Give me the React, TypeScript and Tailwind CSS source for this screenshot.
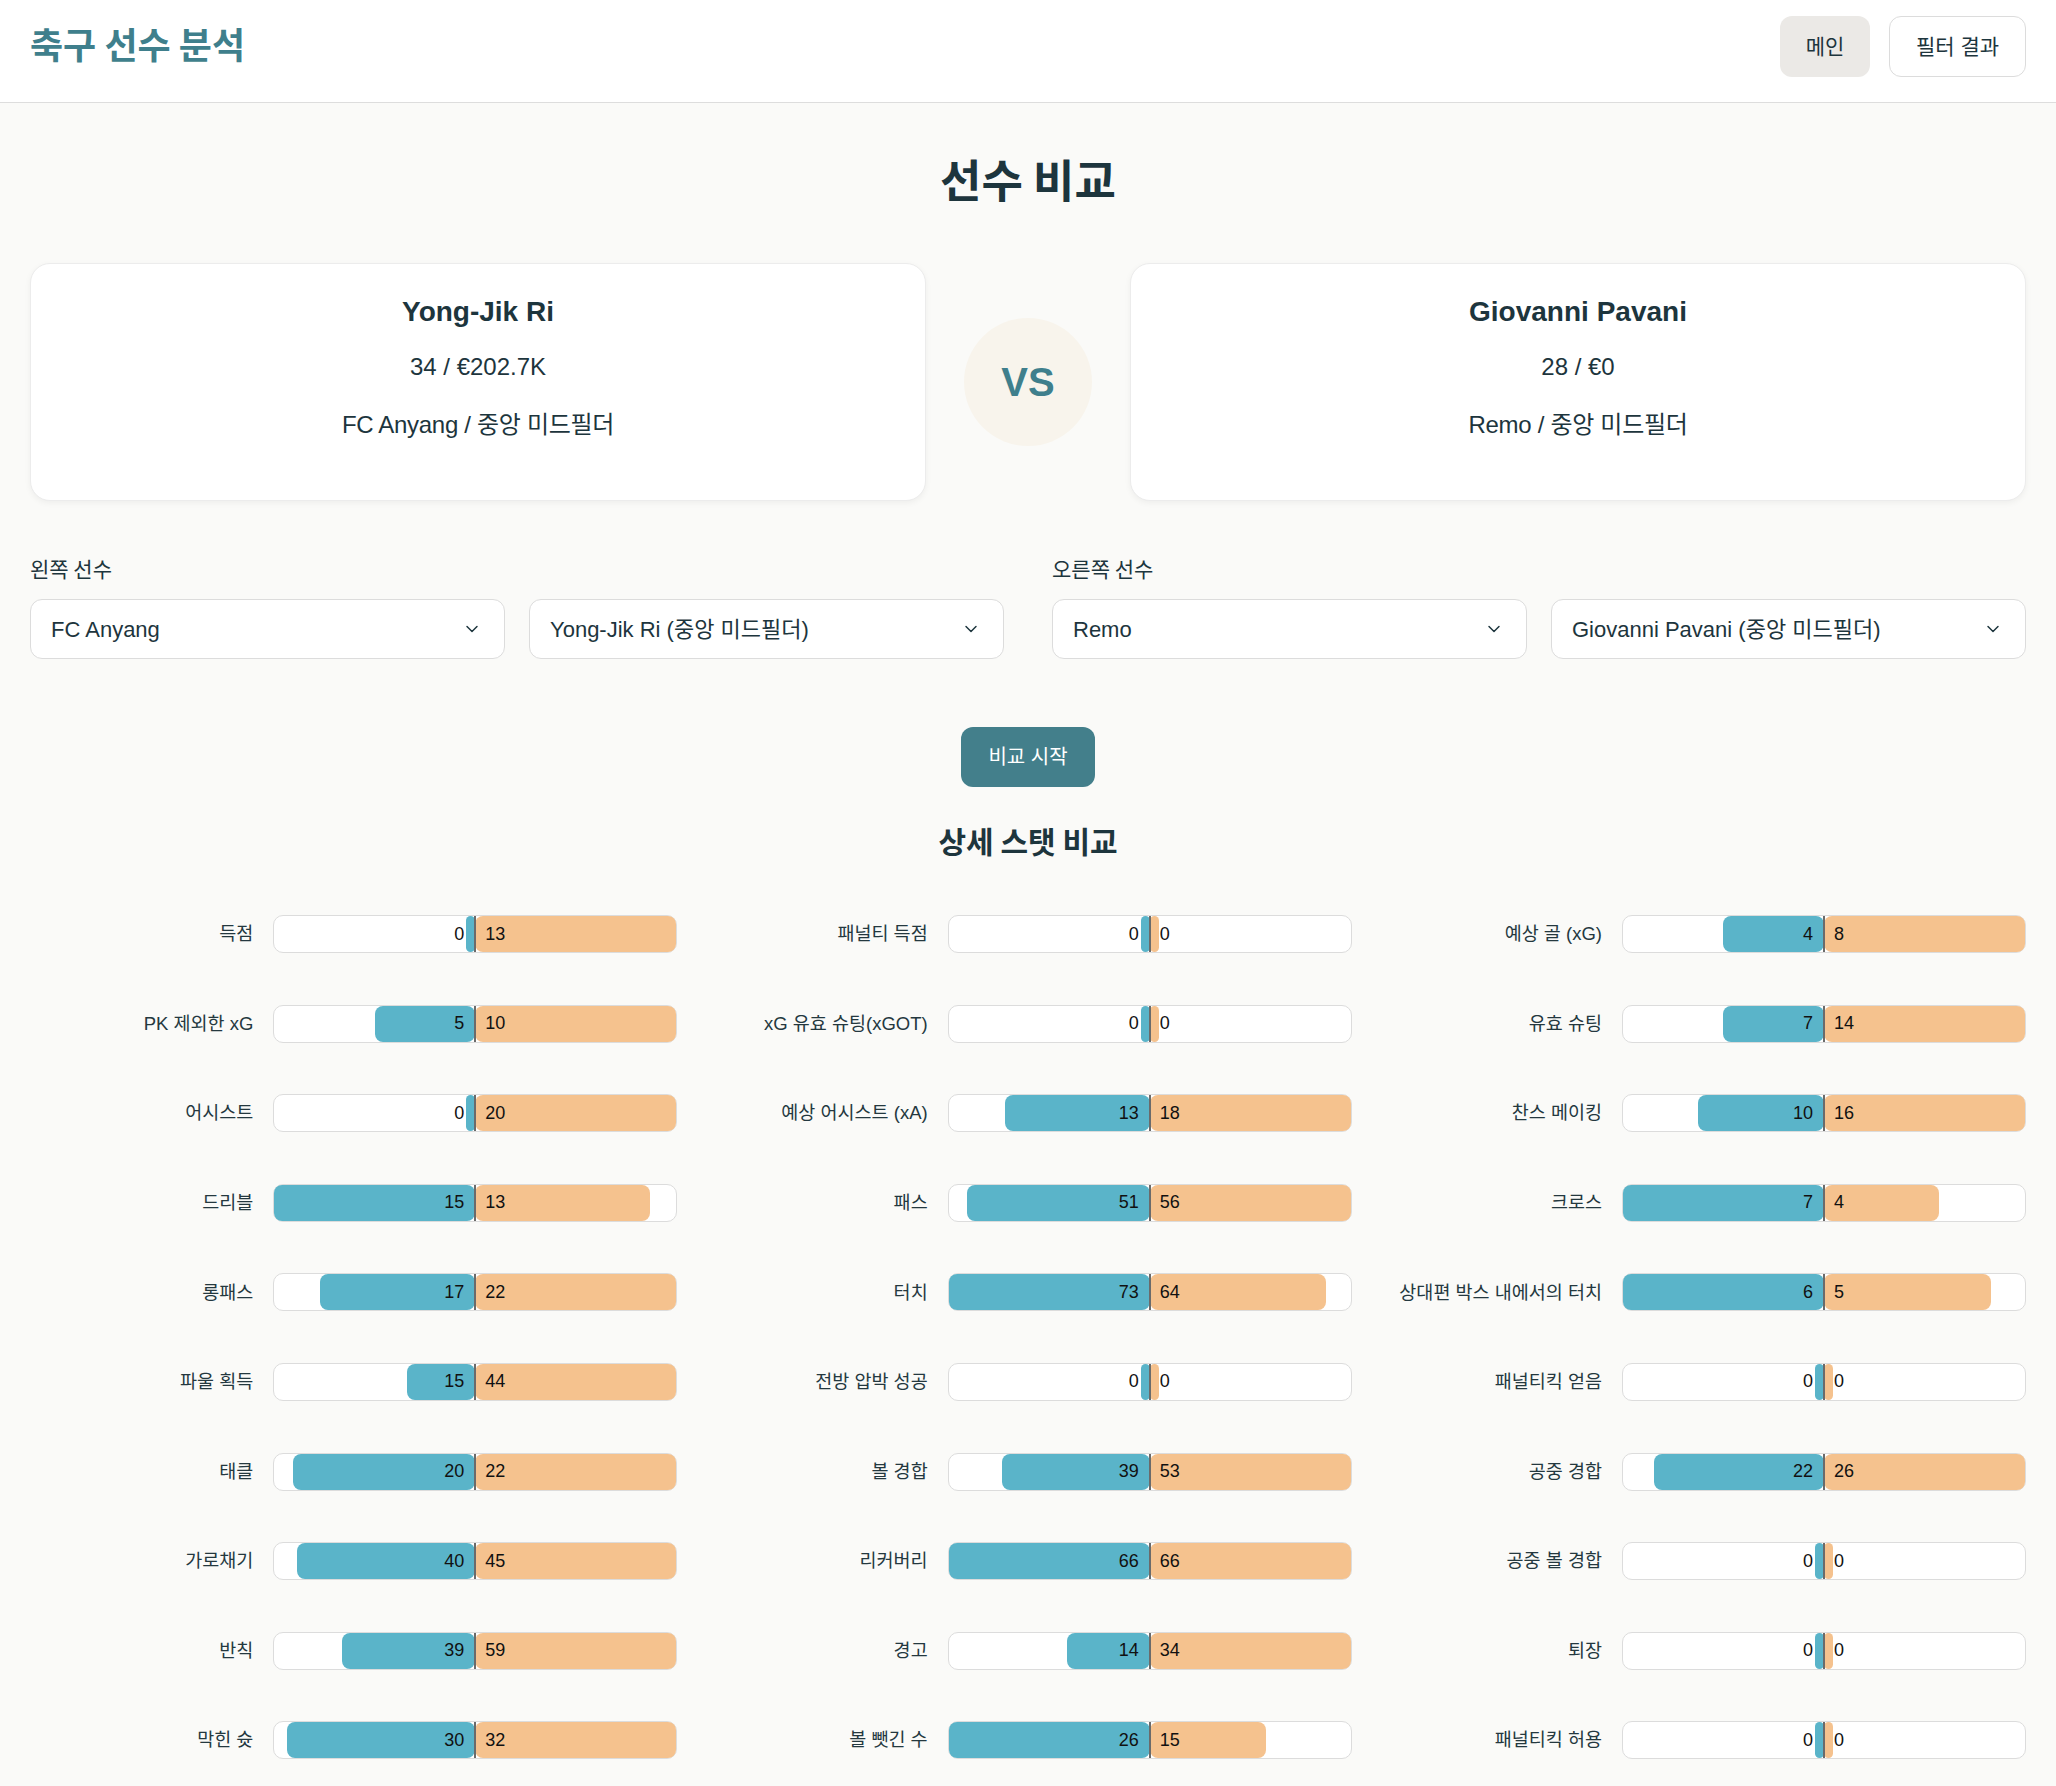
import React from "react";
import {ChevronDown} from "lucide-react";

type Stat = {label: string; left: number; right: number};

const stats: Stat[] = [
  {label: "득점", left: 0, right: 13},
  {label: "패널티 득점", left: 0, right: 0},
  {label: "예상 골 (xG)", left: 4, right: 8},
  {label: "PK 제외한 xG", left: 5, right: 10},
  {label: "xG 유효 슈팅(xGOT)", left: 0, right: 0},
  {label: "유효 슈팅", left: 7, right: 14},
  {label: "어시스트", left: 0, right: 20},
  {label: "예상 어시스트 (xA)", left: 13, right: 18},
  {label: "찬스 메이킹", left: 10, right: 16},
  {label: "드리블", left: 15, right: 13},
  {label: "패스", left: 51, right: 56},
  {label: "크로스", left: 7, right: 4},
  {label: "롱패스", left: 17, right: 22},
  {label: "터치", left: 73, right: 64},
  {label: "상대편 박스 내에서의 터치", left: 6, right: 5},
  {label: "파울 획득", left: 15, right: 44},
  {label: "전방 압박 성공", left: 0, right: 0},
  {label: "패널티킥 얻음", left: 0, right: 0},
  {label: "태클", left: 20, right: 22},
  {label: "볼 경합", left: 39, right: 53},
  {label: "공중 경합", left: 22, right: 26},
  {label: "가로채기", left: 40, right: 45},
  {label: "리커버리", left: 66, right: 66},
  {label: "공중 볼 경합", left: 0, right: 0},
  {label: "반칙", left: 39, right: 59},
  {label: "경고", left: 14, right: 34},
  {label: "퇴장", left: 0, right: 0},
  {label: "막힌 슛", left: 30, right: 32},
  {label: "볼 뺏긴 수", left: 26, right: 15},
  {label: "패널티킥 허용", left: 0, right: 0},
];

function StatRow({stat}: {stat: Stat}) {
  const max = Math.max(stat.left, stat.right);
  const leftPct = max > 0 ? (stat.left / max) * 100 : 0;
  const rightPct = max > 0 ? (stat.right / max) * 100 : 0;
  return (
    <div className="flex items-center gap-[20px]">
      <div className="flex-1 text-right text-[18.5px] text-[#24383f] whitespace-nowrap">{stat.label}</div>
      <div className="relative flex w-[404px] h-[38px] shrink-0 rounded-[10px] border border-[#dcdcdc] bg-white">
        <div className="flex w-1/2 justify-end">
          <div className="h-full min-w-[9px] rounded-[8px] bg-[#5ab4c9]" style={{width: `${leftPct}%`}} />
        </div>
        <div className="flex w-1/2 justify-start">
          <div className="h-full min-w-[9px] rounded-[8px] bg-[#f5c28e]" style={{width: `${rightPct}%`}} />
        </div>
        <div className="absolute left-1/2 top-0 h-full w-[2px] -translate-x-1/2 bg-[#6b6b6b]" />
        <span className="absolute right-[calc(50%+11px)] top-0 h-full flex items-center text-[18px] font-medium text-[#111]">
          {stat.left}
        </span>
        <span className="absolute left-[calc(50%+10px)] top-0 h-full flex items-center text-[18px] font-medium text-[#111]">
          {stat.right}
        </span>
      </div>
    </div>
  );
}

function FakeSelect({value}: {value: string}) {
  return (
    <div className="flex h-[60px] items-center justify-between rounded-[12px] border border-[#dcdcdc] bg-white pl-[20px] pr-[22px] text-[22px] text-[#1d353d]">
      <span>{value}</span>
      <ChevronDown size={20} strokeWidth={1.75} className="text-[#1d353d]" />
    </div>
  );
}

function PlayerCard({name, info, team}: {name: string; info: string; team: string}) {
  return (
    <div className="flex h-[238px] flex-col items-center rounded-[20px] border border-[#ececec] bg-white pt-[31px] shadow-[0_2px_6px_rgba(0,0,0,0.05)]">
      <div className="text-[28px] leading-[34px] font-semibold text-[#1d353d]">{name}</div>
      <div className="mt-[23px] text-[24px] leading-[30px] text-[#1d353d]">{info}</div>
      <div className="mt-[28px] text-[24px] leading-[30px] tracking-[-0.3px] text-[#1d353d]">{team}</div>
    </div>
  );
}

export default function App() {
  return (
    <div className="min-h-screen bg-[#fafaf8] font-['Liberation_Sans','Noto_Sans_CJK_KR',sans-serif]">
      <header className="flex h-[103px] items-start justify-between border-b border-[#dddddd] bg-white px-[30px] pt-[16px]">
        <div className="flex h-[61px] items-center">
          <h1 className="-mt-[8px] font-['Noto_Sans_CJK_KR',sans-serif] text-[36px] leading-none font-bold text-[#3f7f8c]">
            축구 선수 분석
          </h1>
        </div>
        <div className="flex gap-[19px]">
          <button className="h-[61px] w-[90px] rounded-[12px] bg-[#ebe9e6] text-[21px] text-[#1d353d]">메인</button>
          <button className="h-[61px] w-[137px] rounded-[12px] border border-[#dcdcdc] bg-white text-[21px] text-[#1d353d]">
            필터 결과
          </button>
        </div>
      </header>

      <main className="px-[30px] pt-[55px] pb-[60px]">
        <h2 className="text-center font-['Noto_Sans_CJK_KR',sans-serif] text-[45px] leading-[42px] font-bold text-[#1d353d]">
          선수 비교
        </h2>

        <div className="mt-[63px] grid grid-cols-[1fr_128px_1fr] items-center gap-x-[38px]">
          <PlayerCard name="Yong-Jik Ri" info="34 / €202.7K" team="FC Anyang / 중앙 미드필더" />
          <div className="flex h-[128px] w-[128px] items-center justify-center rounded-full bg-[#f8f4ec]">
            <span className="text-[40px] font-bold text-[#3f7f8c]">VS</span>
          </div>
          <PlayerCard name="Giovanni Pavani" info="28 / €0" team="Remo / 중앙 미드필더" />
        </div>

        <div className="mt-[53px] grid grid-cols-2 gap-x-[48px]">
          <div>
            <div className="mb-[17px] font-['Noto_Sans_CJK_KR',sans-serif] text-[21px] leading-[28px] text-[#1d353d]">왼쪽 선수</div>
            <div className="grid grid-cols-2 gap-x-[24px]">
              <FakeSelect value="FC Anyang" />
              <FakeSelect value="Yong-Jik Ri (중앙 미드필더)" />
            </div>
          </div>
          <div>
            <div className="mb-[17px] font-['Noto_Sans_CJK_KR',sans-serif] text-[21px] leading-[28px] text-[#1d353d]">오른쪽 선수</div>
            <div className="grid grid-cols-2 gap-x-[24px]">
              <FakeSelect value="Remo" />
              <FakeSelect value="Giovanni Pavani (중앙 미드필더)" />
            </div>
          </div>
        </div>

        <div className="mt-[68px] flex justify-center">
          <button className="h-[60px] w-[134px] rounded-[12px] bg-[#437f8b] text-[20px] text-white">비교 시작</button>
        </div>

        <h3 className="mt-[39px] text-center font-['Noto_Sans_CJK_KR',sans-serif] text-[30px] leading-[28px] font-bold text-[#1d353d]">
          상세 스탯 비교
        </h3>

        <div className="mt-[61px] grid grid-cols-3 gap-x-[27px] gap-y-[51.6px]">
          {stats.map((s) => (
            <StatRow key={s.label} stat={s} />
          ))}
        </div>
      </main>
    </div>
  );
}
